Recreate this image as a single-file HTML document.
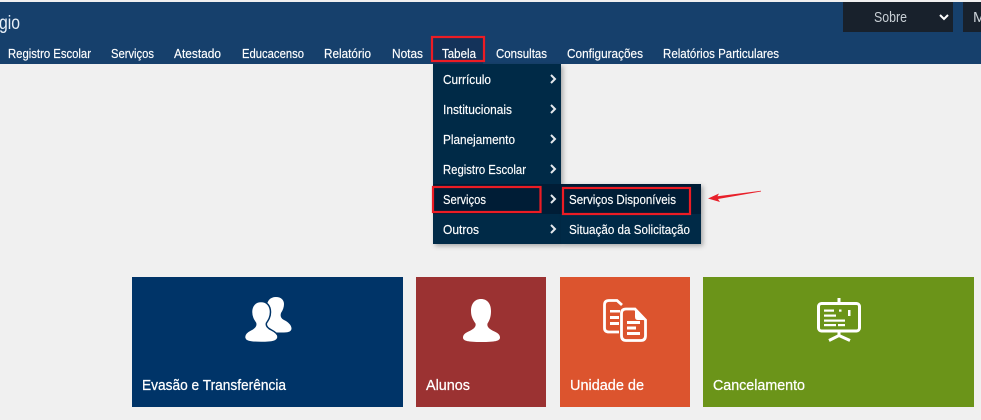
<!DOCTYPE html>
<html><head><meta charset="utf-8"><style>
html,body{margin:0;padding:0;width:981px;height:420px;overflow:hidden;background:#f0f0f0}
svg{display:block}
text{font-family:"Liberation Sans",sans-serif;fill:#fff;stroke:#fff;stroke-width:.15px}
.n{font-size:13px}
.t{font-size:15px;stroke-width:.25px}
</style></head><body>
<svg width="981" height="420" viewBox="0 0 981 420" xmlns="http://www.w3.org/2000/svg">
<defs>
<filter id="s" x="-10%" y="-10%" width="125%" height="125%"><feDropShadow dx="2" dy="2" stdDeviation="2.5" flood-color="#000" flood-opacity=".3"/></filter>
</defs>
<rect width="981" height="420" fill="#f0f0f0"/>
<rect y="2" width="981" height="62" fill="#16406c"/>
<text x="-1" y="29" font-size="19" textLength="21" lengthAdjust="spacingAndGlyphs" style="fill:#e8f0f8;stroke:none">gio</text>

<rect x="843" y="2" width="110" height="30" fill="#18212c"/>
<rect x="963" y="2" width="18" height="30" fill="#18212c"/>
<text x="874" y="22" font-size="15" textLength="33" lengthAdjust="spacingAndGlyphs" style="fill:#c9d0d6;stroke:none">Sobre</text>
<path d="M940 15l4 4 4-4" fill="none" stroke="#fff" stroke-width="2"/>
<text x="973" y="22" font-size="15" style="fill:#c9d0d6;stroke:none">M</text>

<rect x="433" y="37" width="50" height="27" fill="#14335a"/>
<text class="n" x="8" y="58" textLength="83" lengthAdjust="spacingAndGlyphs">Registro Escolar</text>
<text class="n" x="111" y="58" textLength="43" lengthAdjust="spacingAndGlyphs">Serviços</text>
<text class="n" x="174" y="58" textLength="47" lengthAdjust="spacingAndGlyphs">Atestado</text>
<text class="n" x="242" y="58" textLength="62" lengthAdjust="spacingAndGlyphs">Educacenso</text>
<text class="n" x="324" y="58" textLength="47" lengthAdjust="spacingAndGlyphs">Relatório</text>
<text class="n" x="392" y="58" textLength="31" lengthAdjust="spacingAndGlyphs">Notas</text>
<text class="n" x="442" y="58" textLength="34" lengthAdjust="spacingAndGlyphs">Tabela</text>
<text class="n" x="496" y="58" textLength="51" lengthAdjust="spacingAndGlyphs">Consultas</text>
<text class="n" x="567" y="58" textLength="76" lengthAdjust="spacingAndGlyphs">Configurações</text>
<text class="n" x="663" y="58" textLength="116" lengthAdjust="spacingAndGlyphs">Relatórios Particulares</text>

<rect x="433" y="64" width="128" height="180" fill="#002947" filter="url(#s)"/>
<rect x="433" y="184" width="128" height="30" fill="#001d36"/>
<rect x="561" y="184" width="140" height="60" fill="#002947" filter="url(#s)"/>
<rect x="561" y="184" width="140" height="30" fill="#001d36"/>

<text class="n" x="443" y="84" textLength="48" lengthAdjust="spacingAndGlyphs">Currículo</text>
<text class="n" x="443" y="114" textLength="69" lengthAdjust="spacingAndGlyphs">Institucionais</text>
<text class="n" x="443" y="144" textLength="72" lengthAdjust="spacingAndGlyphs">Planejamento</text>
<text class="n" x="443" y="174" textLength="83" lengthAdjust="spacingAndGlyphs">Registro Escolar</text>
<text class="n" x="443" y="204" textLength="43" lengthAdjust="spacingAndGlyphs">Serviços</text>
<text class="n" x="443" y="234" textLength="36" lengthAdjust="spacingAndGlyphs">Outros</text>
<text class="n" x="569" y="204" textLength="107" lengthAdjust="spacingAndGlyphs">Serviços Disponíveis</text>
<text class="n" x="569" y="234" textLength="121" lengthAdjust="spacingAndGlyphs">Situação da Solicitação</text>

<g fill="none" stroke="#e4e8ec" stroke-width="2">
<path d="M551 75l4 4-4 4"/><path d="M551 105l4 4-4 4"/><path d="M551 135l4 4-4 4"/>
<path d="M551 165l4 4-4 4"/><path d="M551 195l4 4-4 4"/><path d="M551 225l4 4-4 4"/>
</g>

<g fill="none" stroke="#ec1c24" stroke-width="2.200">
<rect x="432" y="37" width="52" height="24"/>
<rect x="433" y="187" width="107.500" height="25"/>
<rect x="563" y="188" width="127" height="26"/>
</g>
<path d="M708 198.500L719 193.500L717.500 196.300L761 190.700L761 191.500L718 199L720 202Z" fill="#e8202a"/>

<rect x="132" y="277" width="271" height="130" fill="#003468"/>
<rect x="416" y="277" width="130" height="130" fill="#9b3232"/>
<rect x="560" y="277" width="130" height="130" fill="#dc542e"/>
<rect x="703" y="277" width="271" height="130" fill="#6b9419"/>

<text class="t" x="142" y="390" textLength="144" lengthAdjust="spacingAndGlyphs">Evasão e Transferência</text>
<text class="t" x="426" y="390" textLength="44" lengthAdjust="spacingAndGlyphs">Alunos</text>
<text class="t" x="570" y="390" textLength="74" lengthAdjust="spacingAndGlyphs">Unidade de</text>
<text class="t" x="713" y="390" textLength="92" lengthAdjust="spacingAndGlyphs">Cancelamento</text>

<!-- users -->
<path fill="#fff" d="M276 297C270 297 267 301 267 306C267 309 266 315 262 320L270 332C275 332.500 279 332.500 284 332.500C289 332.500 291.500 331 291.500 328.500C291.500 325 288 322 284 320C281 318.500 280 316 281 313C283 310 284 307 284 304C284 300 281 297 276 297Z"/>
<path fill="#fff" stroke="#003468" stroke-width="1.500" d="M261 301.500C255 301.500 251.500 306 251.500 312C251.500 317 253.500 320 255.500 323C256.500 326 254.500 328 250.500 330C246.500 332 244.500 334 244.500 337C244.500 341.500 250 342.500 261 342.500C272 342.500 278 341.500 278 337C278 334 275.500 332 271.500 330C267.500 328 265.500 326 266.500 323C268.500 320 270.500 317 270.500 312C270.500 306 267 301.500 261 301.500Z"/>
<!-- user -->
<path fill="#fff" d="M481 299C474.500 299 471 304 471 311C471 317 473.500 320.500 475.500 323.500C476.500 327 473 329.500 468.500 331.500C465 333 463 335 463 337.500C463 341 468 342 481.500 342C495 342 500 341 500 337.500C500 335 498 333 494.500 331.500C490 329.500 486.500 327 487.500 323.500C489.500 320.500 491 317 491 311C491 304 487.500 299 481 299Z"/>
<!-- docs -->
<g fill="none" stroke="#fff" stroke-width="2.800">
<path d="M619 332H609Q604.500 332 604.500 328V305Q604.500 300.500 609 300.500H617L622 305"/>
<path d="M626 309H635L645.500 320V335.500Q645.500 340.500 641 340.500H626Q621.500 340.500 621.500 335.500V313.500Q621.500 309 626 309Z"/>
</g>
<path fill="#fff" d="M635 309l11 11h-8q-3 0-3-3z"/>
<g fill="#fff">
<rect x="610" y="310" width="10" height="2.500"/><rect x="610" y="316" width="9" height="3"/><rect x="610" y="322" width="9" height="3"/>
<rect x="627" y="321" width="13" height="3"/><rect x="627" y="326.500" width="9" height="3"/><rect x="627" y="332" width="13" height="3"/>
</g>
<!-- board -->
<rect x="818.500" y="303.500" width="41" height="27.500" rx="3" fill="none" stroke="#fff" stroke-width="3"/>
<rect x="837.500" y="298" width="3" height="5" fill="#fff"/>
<rect x="837.500" y="332" width="3" height="4" fill="#fff"/>
<path d="M829 340.500L839 335.500L850 340.500" fill="none" stroke="#fff" stroke-width="3"/>
<g fill="#fff">
<rect x="824" y="309.500" width="10" height="2.200"/><rect x="839" y="309.500" width="2.500" height="2.200"/>
<rect x="848" y="310" width="2.500" height="6"/>
<rect x="824" y="314.500" width="12" height="2.200"/>
<rect x="824" y="319.500" width="21" height="2.200"/>
<rect x="824" y="324" width="12" height="2.200"/><rect x="838" y="324" width="7" height="2.200"/>
</g>
</svg>
</body></html>
